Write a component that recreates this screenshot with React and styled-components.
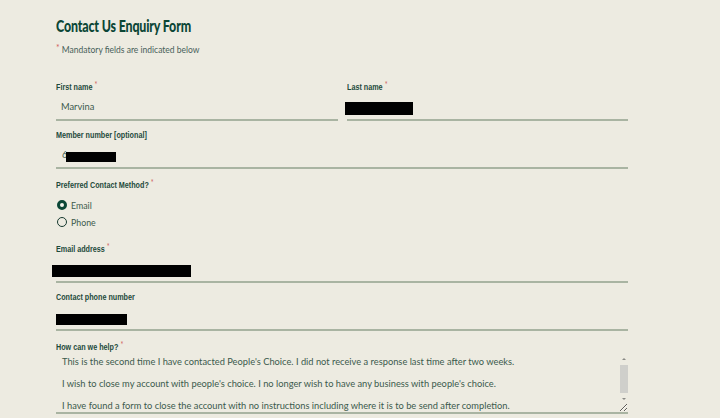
import React from 'react'
import styled, { createGlobalStyle } from 'styled-components'

const GlobalStyle = createGlobalStyle`
  html, body {
    margin: 0;
    padding: 0;
    background: #edebe1;
  }
  body {
    font-family: Lato, "Open Sans", sans-serif;
    color: #3b5a4c;
  }
`

const message = `This is the second time I have contacted People's Choice. I did not receive a response last time after two weeks.

I wish to close my account with people's choice. I no longer wish to have any business with people's choice.

I have found a form to close the account with no instructions including where it is to be send after completion.

`

function App() {
    return (
        <Page>
            <GlobalStyle />
            <Title>Contact Us Enquiry Form</Title>
            <Note><Star>*</Star> Mandatory fields are indicated below</Note>

            <Row>
                <Field>
                    <Label>First name <Star>*</Star></Label>
                    <InputWrap>
                        <Input defaultValue="Marvina" />
                    </InputWrap>
                </Field>
                <Field>
                    <Label>Last name <Star>*</Star></Label>
                    <InputWrap>
                        <Input defaultValue="" />
                        <Redacted $left={-2} $top={7} $width={68} $height={13} />
                    </InputWrap>
                </Field>
            </Row>

            <Field>
                <Label>Member number [optional]</Label>
                <InputWrap>
                    <Input defaultValue="6" $pad={6} />
                    <Redacted $left={10} $top={9} $width={50} $height={10} />
                </InputWrap>
            </Field>

            <Group>
                <Label>Preferred Contact Method? <Star>*</Star></Label>
                <RadioList>
                    <RadioRow>
                        <Radio type="radio" name="method" defaultChecked />
                        Email
                    </RadioRow>
                    <RadioRow>
                        <Radio type="radio" name="method" />
                        Phone
                    </RadioRow>
                </RadioList>
            </Group>

            <Field>
                <Label>Email address <Star>*</Star></Label>
                <InputWrap>
                    <Input defaultValue="" />
                    <Redacted $left={-4} $top={8} $width={139} $height={12} />
                </InputWrap>
            </Field>

            <Field>
                <Label>Contact phone number</Label>
                <InputWrap>
                    <Input defaultValue="" />
                    <Redacted $left={0} $top={9} $width={71} $height={11} />
                </InputWrap>
            </Field>

            <Field>
                <Label>How can we help? <Star>*</Star></Label>
                <InputWrap>
                    <TextArea defaultValue={message} />
                    <ScrollTrack>
                        <Arrow $dir="up" />
                        <Thumb />
                        <Arrow $dir="down" />
                    </ScrollTrack>
                </InputWrap>
            </Field>
        </Page>
    )
}

export default App

const Page = styled.div`
width: 572px;
padding: 16px 0 0 56px;
height: 402px;
overflow: hidden;
`
const Title = styled.h1`
margin: 0;
font-family: Lato, sans-serif;
font-weight: 900;
font-size: 17px;
line-height: 20px;
letter-spacing: -0.2px;
color: #0b4636;
transform: scaleX(0.73);
transform-origin: left center;
white-space: nowrap;
`
const Note = styled.p`
margin: 6px 0 0 0;
font-size: 8.5px;
line-height: 12px;
color: #48605a;
`
const Star = styled.span`
color: #d0605c;
font-family: Lato, sans-serif;
font-weight: 400;
font-size: 8.5px;
vertical-align: 2px;
`
const Row = styled.div`
display: grid;
grid-template-columns: 282px 281px;
column-gap: 9px;
margin-top: 23px;
`
const Field = styled.div`
margin-bottom: 8px;
`
const Label = styled.div`
font-family: "Liberation Sans", Arial, sans-serif;
font-weight: 700;
font-size: 9px;
line-height: 12px;
color: #1d4a3b;
transform: scaleX(0.8);
transform-origin: left center;
white-space: nowrap;
`
const InputWrap = styled.div`
position: relative;
margin-top: 2px;
`
const Input = styled.input`
display: block;
width: 100%;
box-sizing: border-box;
height: 26px;
padding: 0 0 2px ${props => props.$pad ?? 5}px;
border: none;
border-bottom: 2px solid #a9b4a2;
background: transparent;
font-family: Lato, sans-serif;
font-size: 9.3px;
color: #3b5a4c;
outline: none;
`
const Redacted = styled.span`
position: absolute;
left: ${props => props.$left}px;
top: ${props => props.$top}px;
width: ${props => props.$width}px;
height: ${props => props.$height}px;
background: #000;
`
const Group = styled.div`
margin-bottom: 12px;
`
const RadioList = styled.div`
display: flex;
flex-direction: column;
gap: 3px;
margin-top: 7px;
`
const RadioRow = styled.label`
display: flex;
align-items: center;
height: 14px;
font-size: 8.8px;
color: #3b5a4c;
`
const Radio = styled.input`
appearance: none;
width: 10px;
height: 10px;
margin: 0 4px 0 1px;
box-sizing: border-box;
border-radius: 50%;
border: 1.5px solid #16392f;
background: transparent;
&:checked {
  border: 3px solid #0b4636;
  background: #f4f3ec;
}
`
const TextArea = styled.textarea`
display: block;
width: 100%;
box-sizing: border-box;
height: 59px;
padding: 1px 10px 0 6px;
border: none;
border-bottom: 2px solid #a9b4a2;
background: transparent;
font-family: Lato, sans-serif;
font-size: 9.3px;
line-height: 11.1px;
color: #3b5a4c;
outline: none;
resize: vertical;
scrollbar-width: none;
&::-webkit-scrollbar {
  display: none;
}
`
const ScrollTrack = styled.div`
position: absolute;
right: 0;
top: 1px;
width: 8px;
height: 46px;
display: flex;
flex-direction: column;
align-items: center;
justify-content: space-between;
pointer-events: none;
`
const Arrow = styled.span`
width: 0;
height: 0;
margin: 2px 0;
border-left: 2px solid transparent;
border-right: 2px solid transparent;
${props => props.$dir === 'up'
        ? 'border-bottom: 2px solid #8a8a86;'
        : 'border-top: 2px solid #8a8a86;'}
`
const Thumb = styled.span`
width: 8px;
flex: 1;
margin: 3px 0;
background: #cfcfcb;
`
